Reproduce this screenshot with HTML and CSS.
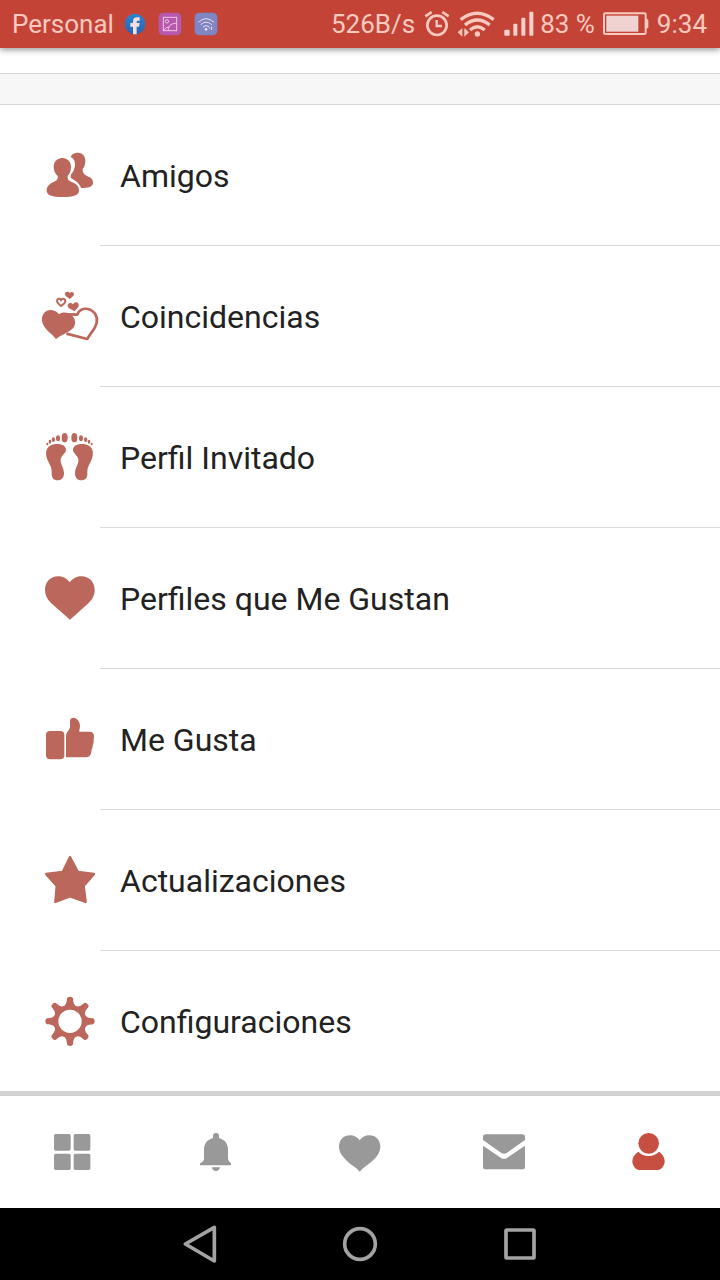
FILE: index.html
```html
<!DOCTYPE html>
<html lang="es">
<head>
<meta charset="utf-8">
<meta name="viewport" content="width=device-width, initial-scale=1">
<title>Perfil</title>
<link rel="stylesheet" href="styles.css">
</head>
<body class="screen">
<header class="status">
  <div class="status-left">
    <span class="carrier">Personal</span>
    <svg width="22" height="22" viewBox="0 0 66 66" aria-hidden="true">
      <defs><linearGradient id="fb" x1="0" y1="0" x2="0" y2="1"><stop offset="0" stop-color="#2a86d0"/><stop offset="1" stop-color="#2b5fb4"/></linearGradient></defs>
      <circle cx="33" cy="33" r="31" fill="url(#fb)"/>
      <path d="M27 64V41H19V30H27V25Q27 13 39 13H47V23H42Q38 23 38 27V30H47L45 41H38V64Z" fill="#f3dedd"/>
    </svg>
    <svg width="24" height="24" viewBox="0 0 72 72" aria-hidden="true">
      <rect x="2" y="2" width="68" height="68" rx="14" fill="#b558ae"/>
      <g fill="none" stroke="#f0c8e0" stroke-width="3"><rect x="16" y="16" width="40" height="40"/><circle cx="27" cy="28" r="5"/><path d="M18 55Q24 44 33 45Q34 36 55 33M33 45Q30 50 31 55"/></g>
    </svg>
    <svg width="24" height="24" viewBox="0 0 72 72" aria-hidden="true">
      <rect x="2" y="2" width="68" height="68" rx="14" fill="#7f86c6"/>
      <g fill="none" stroke="#f1dce2" stroke-width="3"><path d="M13 31Q36 9 60 31M20 38Q36 23 53 38M27 45Q36 37 45 44"/><path d="M53 44V54M47 46V50"/></g>
      <circle cx="36" cy="52" r="4" fill="#f1dce2"/>
    </svg>
  </div>
  <div class="status-right">
    <span>526B/s</span>
    <svg class="alarm" width="26" height="28" viewBox="315 30 78 84" fill="none" stroke="#fbc9bf" aria-hidden="true">
      <circle cx="354" cy="76" r="29" stroke-width="8"/><path d="M353 60V78H369" stroke-width="7"/><path d="M319 49L338 36M389 49L370 36" stroke-width="8"/>
    </svg>
    <svg class="wifi" width="38" height="28" viewBox="413 30 114 84" aria-hidden="true">
      <g fill="none" stroke="#fbc9bf" stroke-width="10"><path d="M424 59Q474 21 523 59M437 75Q474 45 511 75M452 90Q474 71 496 90"/></g>
      <circle cx="474" cy="102" r="8" fill="#fbc9bf"/><path d="M429 84V110L415 97ZM435 84V110L449 97Z" fill="#fbc9bf"/>
    </svg>
    <svg class="signal" width="30" height="26" viewBox="14 34 90 78" fill="#f5cfcb" aria-hidden="true">
      <rect x="15" y="90" width="16" height="18" rx="3"/><rect x="42" y="72" width="12" height="36" rx="3"/><rect x="66" y="54" width="12" height="54" rx="3"/><rect x="90" y="36" width="12" height="72" rx="3"/>
    </svg>
    <span>83 %</span>
    <svg class="battery" width="46" height="26" viewBox="308 34 138 78" aria-hidden="true">
      <rect x="311" y="41" width="125" height="62" rx="4" fill="none" stroke="#fbc9bf" stroke-width="6"/><rect x="318" y="48" width="96" height="48" fill="#f0d3d1"/><path d="M437 56L444 60V84L437 88Z" fill="#fbc9bf"/>
    </svg>
    <time>9:34</time>
  </div>
</header>

<main class="content">
  <div class="divider"></div>
  <ul class="menu">
    <li><a class="row" href="#amigos">
      <svg class="row-icon" viewBox="0 0 240 210" aria-hidden="true">
        <path d="M122 52C124 43 133 38 143 38C157 38 166 48 166 62C166 73 163 81 158 87C157 96 161 104 171 108C184 113 189 119 189 128C189 140 174 144 154 144C148 132 141 123 126 116C120 113 121 109 124 102C133 92 137 76 134 65C132 57 128 54 122 52Z"/>
        <path d="M97 54C112 54 123 65 123 81C123 93 119 102 113 108C111 117 116 122 127 127C141 133 147 140 147 152C147 165 130 171 98 171C66 171 50 165 50 152C50 140 57 133 69 127C80 122 85 117 83 108C76 102 71 93 71 81C71 65 82 54 97 54Z"/>
      </svg>
      <span class="row-label">Amigos</span></a></li>
    <li><a class="row" href="#coincidencias">
      <svg class="row-icon" viewBox="0 3 240 210" aria-hidden="true">
        <path d="M78 178C69 162 38 148 36 121C34 101 50 87 68 91C77 93 83 97 87 103C94 96 112 95 123 104C136 113 139 130 131 142C121 157 93 164 78 178Z"/>
        <path d="M110 103L142 104C145 91 158 84 174 87C192 91 204 108 200 128C196 148 179 161 172 177L109 161" fill="none" stroke="currentColor" stroke-width="8" stroke-linejoin="round"/>
        <path d="M93 78C88 73 81 70 81 63C81 55 90 54 93 60C97 54 107 56 106 64C105 71 98 74 93 78Z" fill="none" stroke="currentColor" stroke-width="6"/>
        <path d="M119 57C114 52 105 49 105 42C105 34 116 34 119 39C123 34 132 36 132 42C132 49 124 53 119 57Z"/>
        <path d="M134 94C127 88 113 86 113 77C113 68 124 67 129 73C133 65 145 64 146 74C147 84 138 86 134 94Z"/>
      </svg>
      <span class="row-label">Coincidencias</span></a></li>
    <li><a class="row" href="#invitado">
      <svg class="row-icon" viewBox="0 6 240 210" aria-hidden="true">
        <g id="foot"><path d="M76 72C95 70 108 77 108 89C108 100 94 105 92 118C90 132 102 143 102 160C102 173 95 181 83 181C71 181 64 173 65 159C66 145 61 136 55 125C42 99 47 75 76 72Z"/><ellipse cx="104" cy="53" rx="9" ry="14"/><ellipse cx="84" cy="55" rx="6" ry="9"/><ellipse cx="70" cy="59" rx="5" ry="7"/><ellipse cx="60" cy="65" rx="4" ry="6"/><ellipse cx="52" cy="72" rx="3" ry="4"/></g>
        <use href="#foot" transform="translate(237 0) scale(-1 1)"/>
      </svg>
      <span class="row-label">Perfil Invitado</span></a></li>
    <li><a class="row" href="#perfiles">
      <svg class="row-icon" viewBox="0 9 240 210" aria-hidden="true">
        <path d="M120 179L63 129C51 117 45 105 45 90C45 65 62 49 84 49C101 49 112 57 119 67C127 57 138 49 154 49C177 49 194 66 194 90C194 106 187 118 176 129Z"/>
      </svg>
      <span class="row-label">Perfiles que Me Gustan</span></a></li>
    <li><a class="row" href="#me-gusta">
      <svg class="row-icon" viewBox="0 12 240 210" aria-hidden="true">
        <rect x="48" y="93" width="55" height="85" rx="12"/>
        <path d="M108 171V107C110 95 118 91 120 82V65C120 57 123 53 130 53C141 53 150 64 150 78C150 86 147 90 148 95H178C188 95 192 101 192 109C192 115 190 119 191 125C191 130 188 133 188 139C188 145 184 148 184 155C182 167 177 172 165 172H110Z"/>
      </svg>
      <span class="row-label">Me Gusta</span></a></li>
    <li><a class="row" href="#actualizaciones">
      <svg class="row-icon" viewBox="0 15 240 210" aria-hidden="true">
        <path d="M120 51L144 96L192 102L161 138L167 186L120 169L76 186L80 138L48 102L98 96Z" stroke="currentColor" stroke-width="7" stroke-linejoin="round"/>
      </svg>
      <span class="row-label">Actualizaciones</span></a></li>
    <li><a class="row" href="#configuraciones">
      <svg class="row-icon" viewBox="0 3 240 210" aria-hidden="true">
        <g transform="translate(120 109)">
          <circle r="42" fill="none" stroke="currentColor" stroke-width="14"/>
          <g id="teeth"><path id="tooth" d="M-22 -43C-12 -49 -10 -54 -9 -69Q-8 -74 0 -74Q8 -74 9 -69C10 -54 12 -49 22 -43Z"/><use href="#tooth" transform="rotate(90)"/><use href="#tooth" transform="rotate(180)"/><use href="#tooth" transform="rotate(270)"/></g>
          <use href="#teeth" transform="rotate(45)"/>
        </g>
      </svg>
      <span class="row-label">Configuraciones</span></a></li>
  </ul>
</main>

<nav class="tabs">
  <button class="tab" aria-label="Inicio"><svg class="icon" viewBox="144 144 144 144"><rect x="162" y="162" width="50" height="50" rx="5"/><rect x="221" y="162" width="50" height="50" rx="5"/><rect x="162" y="221" width="50" height="49" rx="5"/><rect x="221" y="221" width="50" height="49" rx="5"/></svg></button>
  <button class="tab" aria-label="Notificaciones"><svg class="icon" viewBox="576 144 144 144"><path d="M600 256V250Q612 244 612 236V210C612 190 622 179 639 174V168Q639 159 648 159Q657 159 657 168V174C674 179 684 190 684 210V236Q684 244 693 250V256ZM635 262H660Q658 273 648 273Q638 273 635 262Z"/></svg></button>
  <button class="tab" aria-label="Me gusta"><svg class="icon" viewBox="1008 144 144 144"><path d="M1079 275Q1074 268 1064 261C1037 242 1017 222 1017 200C1017 180 1031 166 1050 166C1063 166 1073 172 1079 181C1085 172 1095 166 1108 166C1127 166 1141 180 1141 200C1141 222 1122 241 1095 260Q1085 267 1079 275Z"/></svg></button>
  <button class="tab" aria-label="Mensajes"><svg class="icon" viewBox="240 144 144 144"><path d="M249 180V171Q249 163 257 163H367Q375 163 375 171V180L320 219Q312 224 304 219ZM249 197L302 233Q312 240 322 233L375 197V260Q375 268 367 268H257Q249 268 249 260Z"/></svg></button>
  <button class="tab tab-active" aria-label="Perfil" aria-current="page"><svg class="icon" viewBox="672 144 144 144"><circle cx="746" cy="190" r="31"/><path d="M715 215C729 232 762 232 777 215C788 222 794 232 794 244C794 255 785 270 774 270H717C706 270 697 255 697 244C697 232 704 222 715 215Z"/></svg></button>
</nav>

<footer class="system">
  <button class="key" aria-label="Atrás"><svg class="icon" viewBox="528 420 144 144"><path d="M643 442V543L556 492Z"/></svg></button>
  <button class="key" aria-label="Inicio del sistema"><svg class="icon" viewBox="1008 420 144 144"><circle cx="1080" cy="492" r="46"/></svg></button>
  <button class="key" aria-label="Recientes"><svg class="icon" viewBox="288 420 144 144"><rect x="318" y="450" width="84" height="84" rx="2"/></svg></button>
</footer>
</body>
</html>
```
FILE: styles.css
```css
* {
  box-sizing: border-box;
}

.screen {
  margin: 0;
  min-height: 100vh;
  display: flex;
  flex-direction: column;
  background: #fff;
  color: #222;
  font-family: Roboto, sans-serif;
}

svg {
  display: block;
  flex: none;
}

.status {
  position: relative;
  display: flex;
  justify-content: space-between;
  height: 48px;
  padding: 0 13px 0 12px;
  background: #c34437;
  box-shadow: 0 2px 6px rgba(0, 0, 0, 0.4);
  color: #fbc9bf;
  font-size: 26px;
  line-height: 48px;
  white-space: nowrap;
}

.status-left,
.status-right {
  display: flex;
  align-items: center;
}

.status-left {
  gap: 12px;
}

.carrier {
  margin-right: -2px;
}

.alarm {
  margin-left: 9px;
}

.wifi {
  margin-left: 7px;
}

.signal {
  margin: 0 6px 0 9px;
}

.battery {
  margin: 0 8px;
}

.content {
  flex: 1;
  padding-top: 25px;
}

.divider {
  height: 32px;
  background: #f7f7f7;
  border-top: 1px solid #d6d6d6;
  border-bottom: 1px solid #d6d6d6;
}

.menu {
  margin: 0;
  padding: 0;
  list-style: none;
}

.menu li + li::before {
  content: "";
  display: block;
  height: 1px;
  margin-left: 100px;
  background: #d9d9d9;
}

.row {
  display: flex;
  align-items: center;
  gap: 10px;
  height: 140px;
  padding-left: 30px;
  color: inherit;
  font-size: 32px;
  line-height: 40px;
  text-decoration: none;
}

.row-icon {
  width: 80px;
  height: 70px;
  color: #bb675b;
  fill: currentColor;
}

.row-label {
  padding-top: 2px;
}

.tabs {
  display: grid;
  grid-template-columns: repeat(5, 1fr);
  height: 117px;
  border-top: 5px solid #d2d2d2;
}

.tab,
.key {
  display: grid;
  place-items: center;
  padding: 0;
  border: 0;
  background: none;
}

.icon {
  width: 48px;
  height: 48px;
}

.tab {
  color: #999;
  fill: currentColor;
}

.tab-active {
  color: #c64f42;
}

.system {
  display: flex;
  justify-content: center;
  height: 72px;
  background: #000;
}

.key {
  width: 160px;
  fill: none;
  stroke: #a3a3a3;
  stroke-width: 11px;
  stroke-linejoin: round;
}
```
